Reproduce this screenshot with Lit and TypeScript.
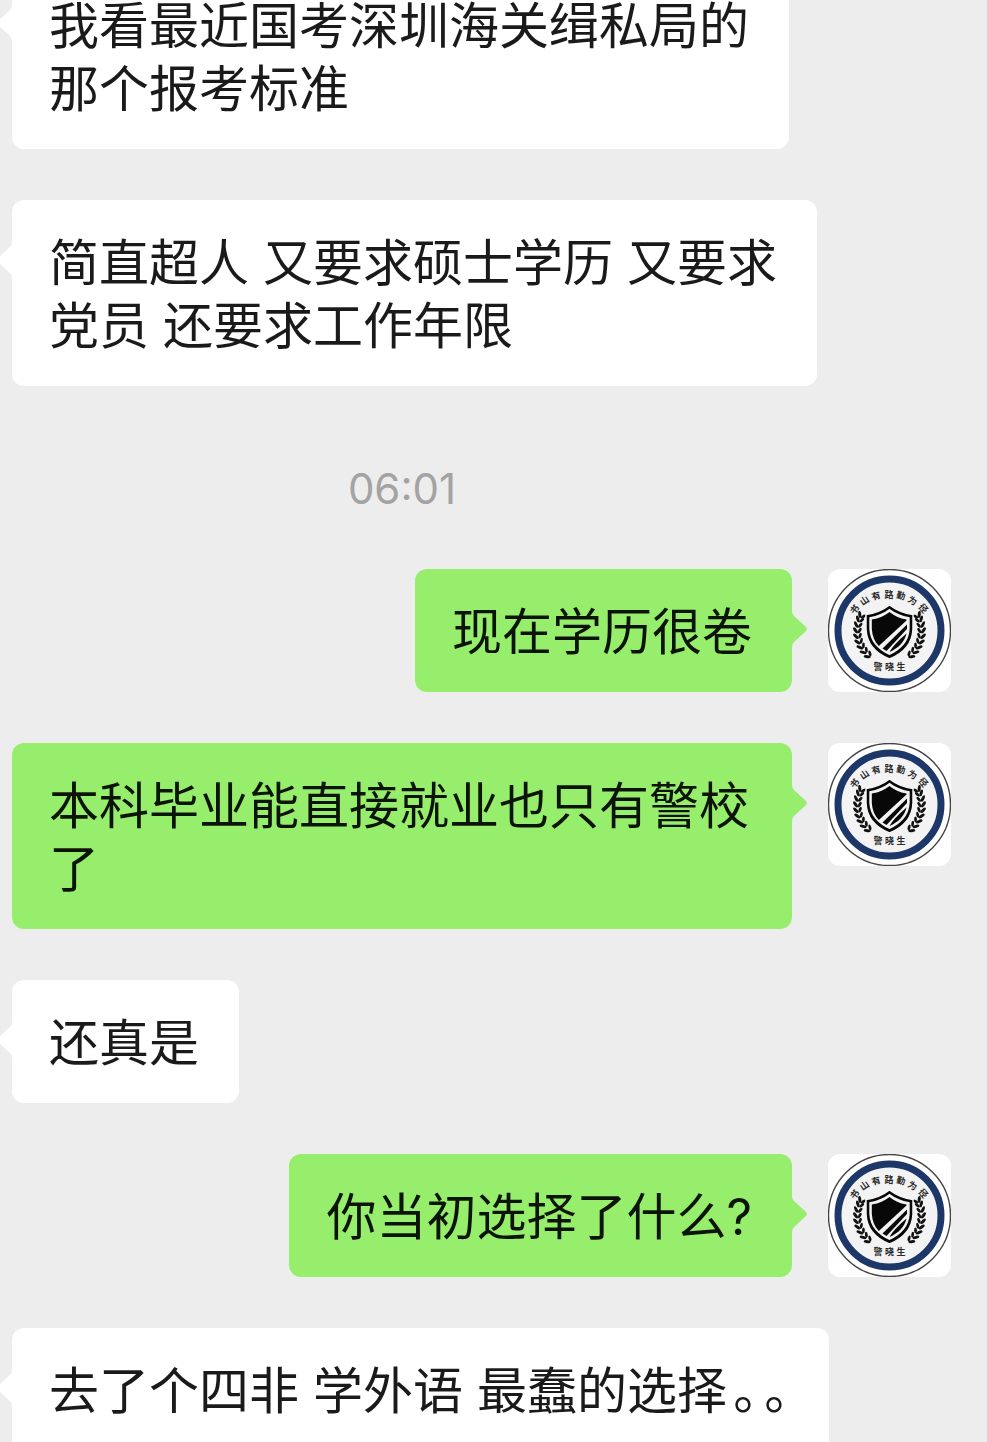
import { LitElement, html, svg, css } from "lit";
import { customElement, property } from "lit/decorators.js";

type Message =
  | { kind: "in" | "out"; text: string; stops?: number }
  | { kind: "time"; text: string };

const MESSAGES: Message[] = [
  { kind: "in", text: "我看最近国考深圳海关缉私局的\n那个报考标准" },
  { kind: "in", text: "简直超人 又要求硕士学历 又要求\n党员 还要求工作年限" },
  { kind: "time", text: "06:01" },
  { kind: "out", text: "现在学历很卷" },
  { kind: "out", text: "本科毕业能直接就业也只有警校了" },
  { kind: "in", text: "还真是" },
  { kind: "out", text: "你当初选择了什么?" },
  { kind: "in", text: "去了个四非 学外语 最蠢的选择", stops: 2 },
];

const MOTTO: [string, number, number, number][] = [
  ["书", 26, 40, -52],
  ["山", 36, 31, -34],
  ["有", 48, 26, -17],
  ["路", 61, 25, 0],
  ["勤", 73, 26, 14],
  ["为", 85, 31, 30],
  ["径", 96, 39, 50],
];

@customElement("crest-avatar")
class CrestAvatar extends LitElement {
  static styles = css`
    :host {
      display: block;
      border-radius: 12px;
      overflow: hidden;
      background: #fff;
    }
    .crest {
      display: block;
      width: 100%;
    }
    .letter {
      font: 700 9px "Noto Sans CJK SC", sans-serif;
      fill: #2a2a2a;
      text-anchor: middle;
    }
  `;

  private branch() {
    const steps = [131, 141, 151, 161, 171, 181, 191, 201, 209];
    return steps.map((deg) => {
      const a = (deg * Math.PI) / 180;
      const at = (r: number) =>
        `translate(${61.5 + r * Math.cos(a)} ${62 + r * Math.sin(a)})`;
      return svg`
        <ellipse rx="3.5" ry="1.5" transform="${at(34)} rotate(${deg + 54})"></ellipse>
        <ellipse rx="3" ry="1.4" transform="${at(29.800)} rotate(${deg + 122})"></ellipse>`;
    });
  }

  render() {
    return html`
      <svg class="crest" viewBox="0 0 123 123" role="img" aria-label="警晓生">
        <circle cx="61.5" cy="61.5" r="61" fill="#fff" stroke="#444" stroke-width="1.4"></circle>
        <circle cx="61.5" cy="61.5" r="51.5" fill="#f3f3f4" stroke="#1c3768" stroke-width="7"></circle>
        ${MOTTO.map(
          ([c, x, y, r]) => svg`<text class="letter" transform="translate(${x} ${y}) rotate(${r})" y="4">${c}</text>`,
        )}
        <g fill="#111">
          ${this.branch()}
          <g transform="matrix(-1 0 0 1 123 0)">${this.branch()}</g>
        </g>
        <path fill="#080808" stroke="#f3f3f4" stroke-width="1.500" d="M61.500 36C55 41 47 44.500 38 45.500V60C38.500 75 48 84.500 61.500 90C75 84.500 84.500 75 85 60V45.500C76 44.500 68 41 61.500 36Z"></path>
        <path fill="#f3f3f4" d="M61.500 39.800C56 44 49.500 47 41.300 48.300V60C42 72.500 50 81 61.500 86C73 81 81 72.500 81.700 60V48.300C73.500 47 67 44 61.500 39.800Z"></path>
        <path fill="#080808" d="M61.500 43C57 46.500 51 49.500 43.800 50.600V60C44.300 67 46.500 72.500 50.800 77L78.500 51.500V50.500C71.500 49.500 66 46.500 61.500 43Z"></path>
        <path fill="#080808" d="M79 55.500V60L58.500 82L54.500 79.500Z"></path>
        <path fill="#080808" d="M78.500 64.500C76.500 73 70.500 79 61.500 83Q65 76 78.500 64.500Z"></path>
        <text class="letter" x="50" y="101">警</text>
        <text class="letter" x="61.5" y="101">晓</text>
        <text class="letter" x="73" y="101">生</text>
      </svg>
    `;
  }
}

@customElement("chat-bubble")
class ChatBubble extends LitElement {
  @property({ reflect: true }) kind = "in";

  static styles = css`
    :host {
      display: block;
      position: relative;
      box-sizing: border-box;
      width: fit-content;
      padding: 32px 40px 28px 37px;
      border-radius: 12px;
      background: var(--bubble);
      --bubble: #fff;
    }
    :host([kind="out"]) {
      --bubble: #96ee6c;
      color: #0b1406;
    }
    .tail {
      position: absolute;
      top: 42px;
      right: 100%;
      width: 15px;
      height: 36px;
      fill: var(--bubble);
      transform: scaleX(-1);
    }
    :host([kind="out"]) .tail {
      right: auto;
      left: 100%;
      transform: none;
    }
  `;

  render() {
    return html`
      <svg class="tail" viewBox="0 0 15 36" aria-hidden="true">
        <path d="M0 0Q0 3 2 5L13.500 15.500Q16 18 13.500 20.500L2 31Q0 33 0 36Z"></path>
      </svg>
      <slot></slot>
    `;
  }
}

@customElement("app-root")
class AppRoot extends LitElement {
  static styles = css`
    :host {
      display: block;
      height: 100vh;
      overflow: hidden;
      background: #ededed;
      color: #1a1a1a;
      font: 50px/63px Inter, "Noto Sans CJK SC", sans-serif;
    }
    .thread {
      display: flex;
      flex-direction: column;
      gap: 51px;
      margin-top: -37px;
      padding: 0 36px 0 12px;
    }
    .row {
      display: grid;
      grid-template-columns: minmax(0, 1fr) 123px;
      column-gap: 36px;
      align-items: start;
    }
    .mine {
      justify-self: end;
    }
    .lines {
      white-space: pre;
    }
    .time {
      margin-top: 23px;
      text-align: center;
      color: #a3a3a3;
      font-size: 42px;
      line-height: 58px;
    }
    .stop {
      margin-left: 6px;
      font-feature-settings: "halt";
    }
  `;

  private row(m: Message) {
    if (m.kind === "time") {
      return html`<div class="row"><time class="time">${m.text}</time></div>`;
    }
    if (m.kind === "out") {
      return html`<div class="row">
        <chat-bubble class="mine" kind="out">${m.text}</chat-bubble>
        <crest-avatar></crest-avatar>
      </div>`;
    }
    const stops = Array.from({ length: m.stops ?? 0 }, () => html`<span class="stop">。</span>`);
    return html`<div class="row">
      <chat-bubble kind="in"><span class="lines">${m.text}${stops}</span></chat-bubble>
    </div>`;
  }

  render() {
    return html`<main class="thread">${MESSAGES.map((m) => this.row(m))}</main>`;
  }
}
